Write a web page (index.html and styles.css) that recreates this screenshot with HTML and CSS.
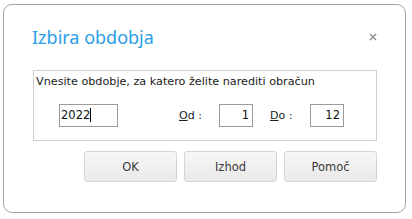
FILE: index.html
```html
<!DOCTYPE html>
<html lang="sl">
<head>
    <meta charset="UTF-8">
    <title>Izbira obdobja</title>
    <meta name="viewport" content="width=device-width, initial-scale=1.0">
    <link rel="stylesheet" href="styles.css">
</head>
<body>
    <div class="dialog">
        <div class="dialog-header">
            <h1 class="dialog-title">Izbira obdobja</h1>
            <svg class="close-button" width="8" height="8" viewBox="0 0 8 8">
                <path d="M1 1 L7 7 M7 1 L1 7" stroke="#8c8c8c" stroke-width="1.4" fill="none"/>
            </svg>
        </div>

        <div class="period-box">
            <div class="period-hint">Vnesite obdobje, za katero želite narediti obračun</div>
            <div class="period-fields">
                <div class="field year-field">2022<span class="caret"></span></div>
                <span class="field-label from-label"><u>O</u>d :</span>
                <div class="field month-field">1</div>
                <span class="field-label to-label"><u>D</u>o :</span>
                <div class="field month-field">12</div>
            </div>
        </div>

        <div class="button-row">
            <button class="dialog-button">OK</button>
            <button class="dialog-button">Izhod</button>
            <button class="dialog-button">Pomoč</button>
        </div>
    </div>
</body>
</html>
```

FILE: styles.css
```css
body {
    margin: 0;
    padding: 0;
    background-color: #ffffff;
    font-family: 'DejaVu Sans', sans-serif;
    font-size: 11px;
    color: #1a1a1a;
}

.dialog {
    margin: 4px 0 0 3px;
    width: 403px;
    height: 209px;
    box-sizing: border-box;
    border: 1px solid #a3a3a3;
    border-radius: 9px;
    padding: 0 28px 0 29px;
    background-color: #ffffff;
}

.dialog-header {
    display: flex;
    align-items: center;
    justify-content: space-between;
    height: 65px;
}

.dialog-title {
    margin: 0 0 1px -1px;
    font-family: 'Noto Sans', sans-serif;
    font-size: 18px;
    font-weight: normal;
    color: #2a9ee6;
}

.close-button {
    margin: 0 0 2px 0;
}

.period-box {
    height: 71px;
    box-sizing: border-box;
    border: 1px solid #cfcfcf;
    padding: 4px 0 0 2px;
}

.period-hint {
    font-size: 11.2px;
    line-height: 14px;
}

.period-fields {
    display: flex;
    align-items: center;
    margin-top: 15px;
}

.field {
    box-sizing: border-box;
    height: 23px;
    line-height: 21px;
    border: 1px solid #9b9b9b;
    padding: 0 3px;
    font-size: 11.5px;
    color: #111;
}

.year-field {
    width: 59px;
    margin-left: 23px;
    padding-left: 1px;
}

.caret {
    display: inline-block;
    width: 1px;
    height: 14px;
    background-color: #000;
    vertical-align: -3px;
}

.month-field {
    width: 34px;
    text-align: right;
}

.field-label {
    color: #222;
}

.from-label {
    margin: 0 0 0 61px;
    width: 40px;
}

.to-label {
    margin: 0 0 0 17px;
    width: 40px;
}

.button-row {
    display: flex;
    justify-content: flex-end;
    gap: 7px;
    margin-top: 10px;
}

.dialog-button {
    width: 93px;
    height: 31px;
    border: 1px solid #d4d4d4;
    border-radius: 3px;
    background: linear-gradient(#f7f7f7, #e9e9e9);
    font-family: 'DejaVu Sans', sans-serif;
    font-size: 11.5px;
    color: #3a3a3a;
    cursor: pointer;
}
```
